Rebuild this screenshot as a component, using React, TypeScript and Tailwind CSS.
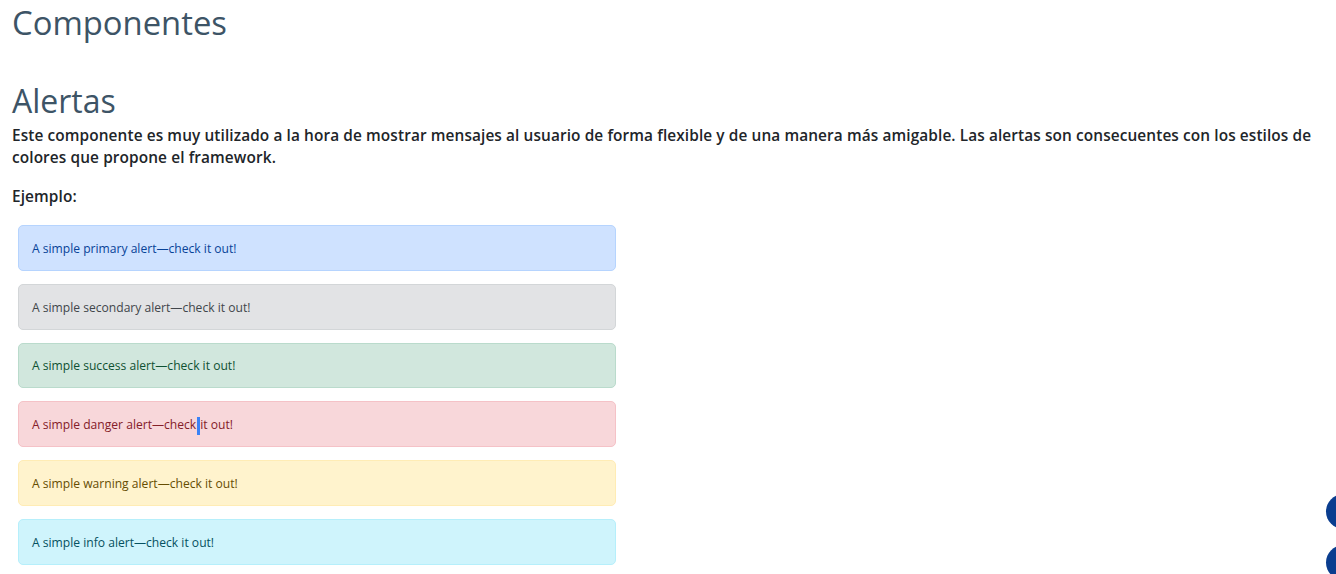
import React from "react";

const alerts = [
  { name: "primary", cls: "bg-[#cfe2ff] border-[#b6d4fe] text-[#084298]" },
  { name: "secondary", cls: "bg-[#e2e3e5] border-[#d3d6d8] text-[#41464b]" },
  { name: "success", cls: "bg-[#d1e7dd] border-[#badbcc] text-[#0f5132]" },
  { name: "danger", cls: "bg-[#f8d7da] border-[#f5c2c7] text-[#842029]" },
  { name: "warning", cls: "bg-[#fff3cd] border-[#ffecb5] text-[#664d03]" },
  { name: "info", cls: "bg-[#cff4fc] border-[#b6effb] text-[#055160]" },
];

export default function App() {
  return (
    <div className="relative h-[574px] w-[1336px] overflow-hidden bg-white">
      <div className="pl-3 pr-[6px]">
        <h1 className="pt-[3px] text-[32.8px] leading-[40px] text-[#3d5466] [font-family:'Open_Sans',sans-serif]">
          Componentes
        </h1>
        <h2 className="mt-[38px] text-[32px] leading-[40px] text-[#3d5466] [font-family:'Open_Sans',sans-serif]">
          Alertas
        </h2>
        <p className="mt-[4px] text-[15.4px] leading-[22px] font-semibold tracking-[0.1px] text-[#212529] [font-family:'Open_Sans',sans-serif]">
          Este componente es muy utilizado a la hora de mostrar mensajes al usuario de forma flexible y de una manera más amigable. Las alertas son consecuentes con los estilos de colores que propone el framework.
        </p>
        <p className="mt-[17px] text-[15.4px] leading-[22px] font-semibold tracking-[0.1px] text-[#212529] [font-family:'Open_Sans',sans-serif]">
          Ejemplo:
        </p>
        <div className="mt-[17px] ml-[6px] flex w-[598px] flex-col gap-[13px]">
          {alerts.map((a) => (
            <div
              key={a.name}
              className={`h-[45.8px] rounded-[5px] border px-[13px] flex items-center pt-[2px] text-[12.1px] [font-family:'Open_Sans',sans-serif] ${a.cls}`}
            >
              {a.name === "danger" ? (
                <span>
                  A simple danger alert—check
                  <span className="inline-block h-[18px] w-[3px] bg-[#3b82f6] align-middle mx-[0.5px]"></span>
                  it out!
                </span>
              ) : (
                <span>A simple {a.name} alert—check it out!</span>
              )}
            </div>
          ))}
        </div>
      </div>
      <div className="absolute left-[1326px] top-[494px] h-[35px] w-[35px] rounded-full bg-[#0a3d8f]"></div>
      <div className="absolute left-[1326px] top-[545px] h-[35px] w-[35px] rounded-full bg-[#0a3d8f]"></div>
    </div>
  );
}
